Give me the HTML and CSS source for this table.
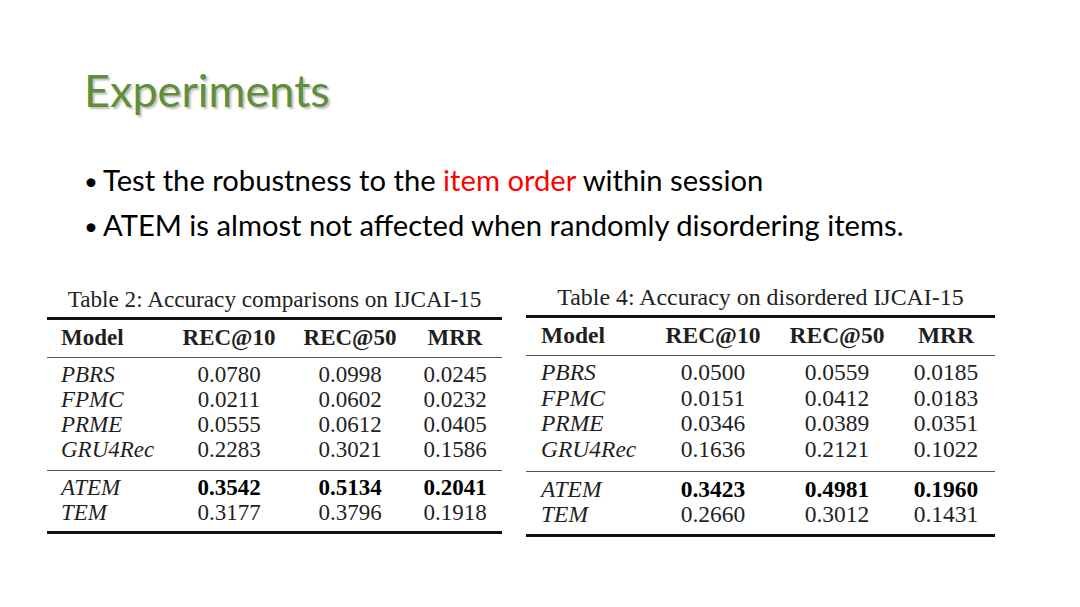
FILE: index.html
```html
<!DOCTYPE html>
<html>
<head>
<meta charset="utf-8">
<link rel="stylesheet" href="styles.css">
</head>
<body>
<div class="slide">
  <h1 class="title">Experiments</h1>
  <ul class="bullets">
    <li>Test the robustness to the <span class="hl">item order</span> within session</li>
    <li>ATEM is almost not affected when randomly disordering items.</li>
  </ul>
  <div class="tables">
    <div class="tbl left">
      <div class="caption">Table 2: Accuracy comparisons on IJCAI-15</div>
      <div class="rule thick"></div>
      <div class="row head"><span class="m">Model</span><span>REC@10</span><span>REC@50</span><span>MRR</span></div>
      <div class="rule thin"></div>
      <div class="group">
        <div class="row"><span class="m">PBRS</span><span>0.0780</span><span>0.0998</span><span>0.0245</span></div>
        <div class="row"><span class="m">FPMC</span><span>0.0211</span><span>0.0602</span><span>0.0232</span></div>
        <div class="row"><span class="m">PRME</span><span>0.0555</span><span>0.0612</span><span>0.0405</span></div>
        <div class="row"><span class="m">GRU4Rec</span><span>0.2283</span><span>0.3021</span><span>0.1586</span></div>
      </div>
      <div class="rule thin"></div>
      <div class="group last">
        <div class="row"><span class="m">ATEM</span><b>0.3542</b><b>0.5134</b><b>0.2041</b></div>
        <div class="row"><span class="m">TEM</span><span>0.3177</span><span>0.3796</span><span>0.1918</span></div>
      </div>
      <div class="rule thick"></div>
    </div>
    <div class="tbl right">
      <div class="caption">Table 4: Accuracy on disordered IJCAI-15</div>
      <div class="rule thick"></div>
      <div class="row head"><span class="m">Model</span><span>REC@10</span><span>REC@50</span><span>MRR</span></div>
      <div class="rule thin"></div>
      <div class="group">
        <div class="row"><span class="m">PBRS</span><span>0.0500</span><span>0.0559</span><span>0.0185</span></div>
        <div class="row"><span class="m">FPMC</span><span>0.0151</span><span>0.0412</span><span>0.0183</span></div>
        <div class="row"><span class="m">PRME</span><span>0.0346</span><span>0.0389</span><span>0.0351</span></div>
        <div class="row"><span class="m">GRU4Rec</span><span>0.1636</span><span>0.2121</span><span>0.1022</span></div>
      </div>
      <div class="rule thin"></div>
      <div class="group last">
        <div class="row"><span class="m">ATEM</span><b>0.3423</b><b>0.4981</b><b>0.1960</b></div>
        <div class="row"><span class="m">TEM</span><span>0.2660</span><span>0.3012</span><span>0.1431</span></div>
      </div>
      <div class="rule thick"></div>
    </div>
  </div>
</div>
</body>
</html>
```
FILE: styles.css
```css
html, body {
  margin: 0;
  padding: 0;
  background: #ffffff;
}
.slide {
  width: 1080px;
  height: 607px;
  overflow: hidden;
  background: #ffffff;
  font-family: "Lato", "Open Sans", sans-serif;
}
.title {
  margin: 0;
  padding: 62px 0 0 84px;
  height: 56px;
  font-weight: 400;
  font-size: 45px;
  line-height: 56px;
  color: #5f8f38;
  text-shadow: 2px 2px 2px rgba(0,0,0,0.25);
}
.bullets {
  list-style: none;
  margin: 0;
  padding: 39px 0 0 84px;
}
.bullets li {
  height: 45px;
  font-size: 29.2px;
  line-height: 45px;
  color: #000;
  white-space: nowrap;
}
.bullets li::before {
  content: "\2022";
  display: inline-block;
  width: 19px;
  font-size: 24px;
  line-height: 1;
  vertical-align: 1px;
}
.hl { color: #ff0000; }
.tables {
  display: flex;
  padding: 38px 0 0 47px;
  gap: 24px;
  align-items: flex-start;
  font-family: "Liberation Serif", "Times New Roman", serif;
  color: #1f1f1f;
}
.tbl.left { width: 455px; --rh: 25px; font-size: 23px; --cap: 23.2px; }
.tbl.right { width: 469px; --rh: 25.7px; font-size: 23.5px; margin-top: -2px; --cap: 23.9px; }
.caption {
  text-align: center;
  font-size: var(--cap);
  line-height: 28px;
  padding-bottom: 4px;
  color: #222;
  white-space: nowrap;
}
.rule { background: #111; }
.rule.thick { height: 3px; }
.rule.thin { height: 1px; background: #555; }
.row {
  display: grid;
  height: var(--rh);
  line-height: var(--rh);
  text-align: center;
}
.left .row { grid-template-columns: 128px 108px 134px 76px; padding-right: 9px; }
.right .row { grid-template-columns: 130px 114px 134px 84px; padding-right: 7px; }
.row .m { text-align: left; padding-left: 14px; font-style: italic; }
.right .row .m { padding-left: 15px; }
.row.head { height: 37px; line-height: 35px; font-weight: bold; }
.row.head .m { font-style: normal; }
.row b { font-weight: bold; color: #000; }
.group { padding: 4px 0 8px; }
.group.last { padding-bottom: 6px; }
.right .group.last { padding-top: 5px; }
```
